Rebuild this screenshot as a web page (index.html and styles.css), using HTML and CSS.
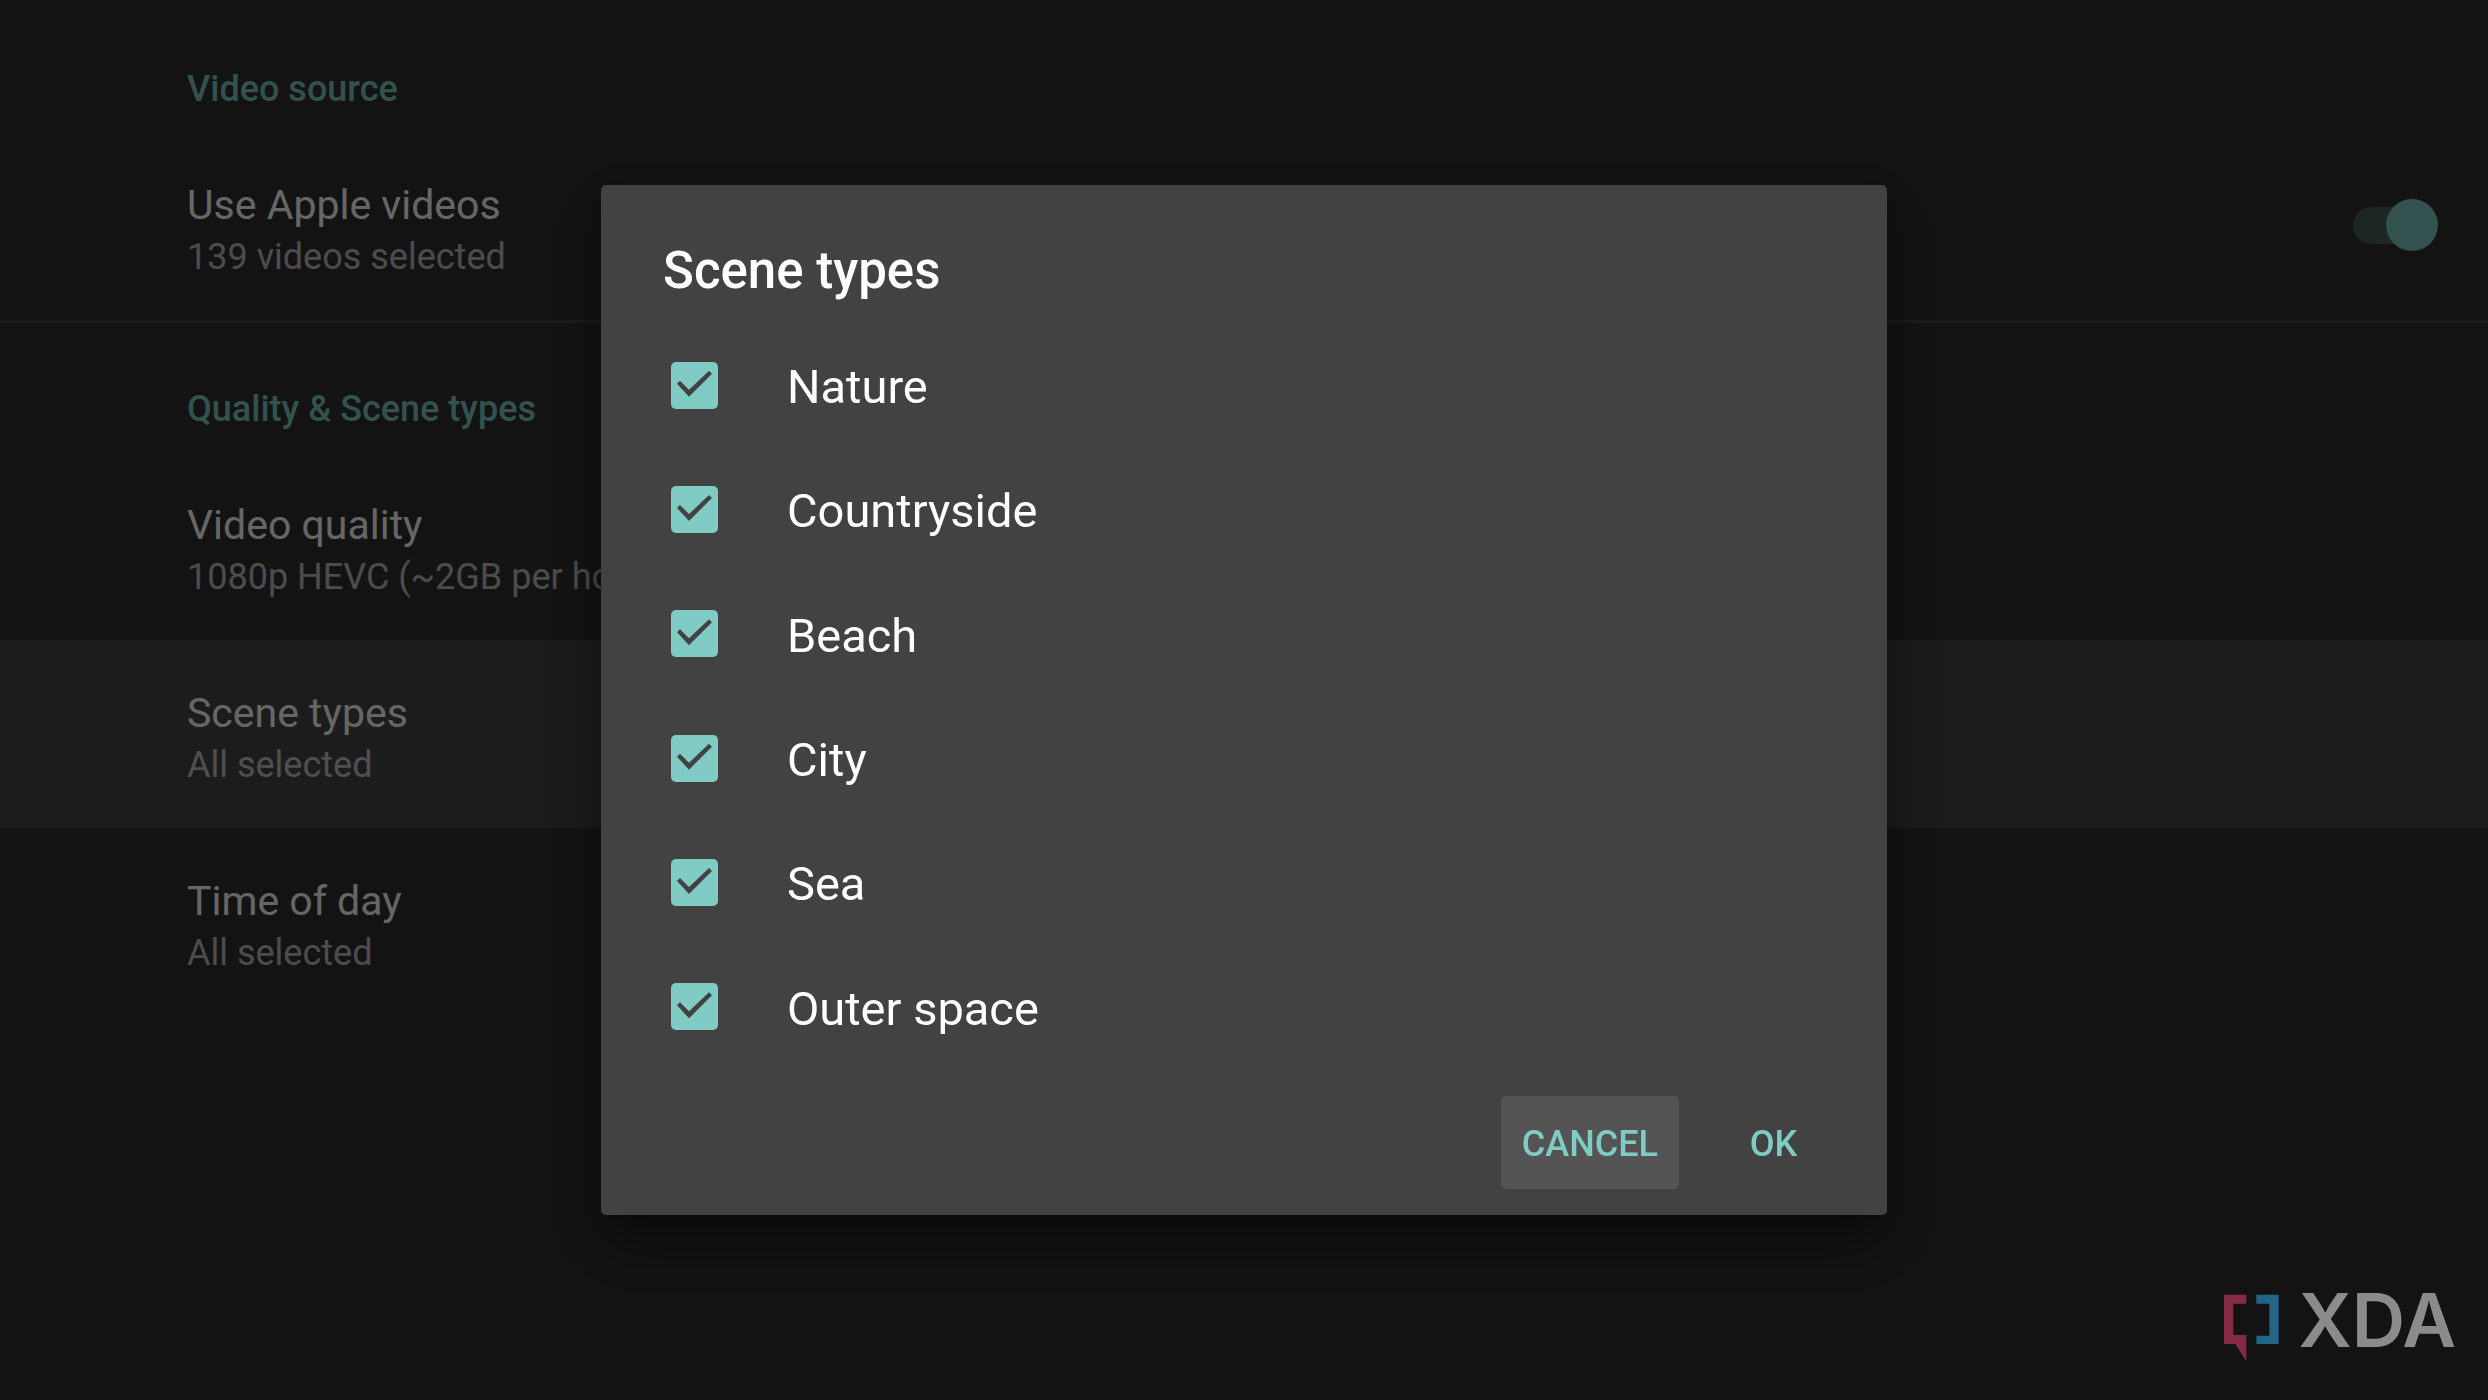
FILE: index.html
```html
<!DOCTYPE html>
<html lang="en">
<head>
<meta charset="utf-8">
<meta name="viewport" content="width=device-width, initial-scale=1">
<title>Video settings</title>
<link rel="stylesheet" href="styles.css">
</head>
<body>
<main class="settings">
  <section class="group">
    <h2 class="category">Video source</h2>
    <div class="row">
      <label class="row-text" for="apple-videos">
        <span class="row-title">Use Apple videos</span>
        <span class="row-summary">139 videos selected</span>
      </label>
      <input class="switch" type="checkbox" role="switch" id="apple-videos" checked>
    </div>
  </section>
  <section class="group">
    <h2 class="category">Quality &amp; Scene types</h2>
    <button class="row" type="button">
      <span class="row-text">
        <span class="row-title">Video quality</span>
        <span class="row-summary">1080p HEVC (~2GB per hour)</span>
      </span>
    </button>
    <button class="row row-focused" type="button">
      <span class="row-text">
        <span class="row-title">Scene types</span>
        <span class="row-summary">All selected</span>
      </span>
    </button>
    <button class="row" type="button">
      <span class="row-text">
        <span class="row-title">Time of day</span>
        <span class="row-summary">All selected</span>
      </span>
    </button>
  </section>
</main>

<div class="scrim">
  <form class="dialog" role="dialog" aria-modal="true" aria-labelledby="dialog-title">
    <h1 class="dialog-title" id="dialog-title">Scene types</h1>
    <div class="choices">
      <label class="choice"><input class="tick" type="checkbox" checked><span class="choice-name">Nature</span></label>
      <label class="choice"><input class="tick" type="checkbox" checked><span class="choice-name">Countryside</span></label>
      <label class="choice"><input class="tick" type="checkbox" checked><span class="choice-name">Beach</span></label>
      <label class="choice"><input class="tick" type="checkbox" checked><span class="choice-name">City</span></label>
      <label class="choice"><input class="tick" type="checkbox" checked><span class="choice-name">Sea</span></label>
      <label class="choice"><input class="tick" type="checkbox" checked><span class="choice-name">Outer space</span></label>
    </div>
    <div class="actions">
      <button class="action action-focused" type="button">CANCEL</button>
      <button class="action" type="button">OK</button>
    </div>
  </form>
</div>

<div class="brand">
  <svg class="brand-mark" viewBox="0 0 165 204" aria-hidden="true">
    <path fill="#852b45" d="M0 2H67V29H28V123H67V202L34 150H0Z"/>
    <path fill="#226587" d="M97 2H164V150H97V125H136V29H97Z"/>
  </svg>
  <span class="brand-name">XDA</span>
</div>
</body>
</html>
```
FILE: styles.css
```css
:root {
  --surface: #303030;
  --raised: #424242;
  --focus: #464646;
  --accent: #80cbc4;
}

* {
  box-sizing: border-box;
}

body {
  margin: 0;
  min-height: 100vh;
  background: var(--surface);
  color: #fff;
  font-family: Roboto, "Liberation Sans", sans-serif;
}

h1,
h2 {
  margin: 0;
  font-weight: 500;
}

button {
  border: 0;
  background: none;
  color: inherit;
  font: inherit;
  text-align: left;
}

/* Settings list */
.settings {
  padding-top: 3px;
}

.group + .group {
  border-top: 3px solid var(--focus);
}

.category {
  padding: 65px 187px 22px;
  color: var(--accent);
  font-size: 36px;
  line-height: 42px;
}

.row {
  display: flex;
  align-items: center;
  justify-content: space-between;
  width: 100%;
  padding: 48px 50px 37px 187px;
}

.row-focused {
  background: var(--focus);
}

.row-text {
  display: flex;
  flex-direction: column;
  gap: 1px;
}

.row-title {
  font-size: 41px;
  line-height: 50px;
}

.row-summary {
  color: rgba(255, 255, 255, 0.7);
  font-size: 36px;
  line-height: 52px;
}

.switch {
  display: grid;
  align-items: center;
  width: 85px;
  height: 52px;
  margin: 0 0 13px;
  appearance: none;
}

.switch::before,
.switch::after {
  grid-area: 1 / 1;
  content: "";
}

.switch::before {
  width: 80px;
  height: 37px;
  border-radius: 19px;
  background: #485f5c;
}

.switch::after {
  justify-self: end;
  width: 52px;
  height: 52px;
  border-radius: 50%;
  background: var(--accent);
}

/* Dialog */
.scrim {
  position: fixed;
  inset: 0;
  display: flex;
  align-items: center;
  justify-content: center;
  background: rgba(0, 0, 0, 0.6);
}

.dialog {
  width: 1286px;
  max-width: 100%;
  border-radius: 5px;
  background: var(--raised);
  box-shadow: 0 30px 60px rgba(0, 0, 0, 0.4), 0 0 30px rgba(0, 0, 0, 0.2);
}

.dialog-title {
  padding: 55px 62px 21px;
  font-size: 51px;
  line-height: 62px;
}

.choices {
  display: grid;
  grid-template-rows: repeat(6, 1fr);
  height: 746px;
}

.choice {
  display: flex;
  align-items: center;
  gap: 69px;
  padding: 0 70px;
  font-size: 47px;
  line-height: 56px;
}

.choice-name {
  padding-top: 4px;
}

.tick {
  display: grid;
  width: 47px;
  height: 47px;
  margin: 0;
  border-radius: 5px;
  background: var(--accent);
  appearance: none;
}

.tick:checked::before {
  content: "";
  background: var(--raised);
  clip-path: path("M6 22L9 19L18 28L38 9L41 12L18 35Z");
}

.actions {
  display: flex;
  justify-content: flex-end;
  gap: 22px;
  padding: 27px 41px 26px;
}

.action {
  min-width: 145px;
  padding: 27px 21px 24px;
  border-radius: 5px;
  color: var(--accent);
  font-size: 36px;
  font-weight: 500;
  line-height: 42px;
  text-align: center;
}

.action-focused {
  background: #545454;
}

/* Watermark over the lower right corner */
.brand {
  position: fixed;
  right: 32px;
  bottom: 38px;
  display: flex;
  justify-content: space-between;
  width: 232px;
}

.brand-mark {
  width: 55px;
  height: 68px;
}

.brand-name {
  color: #8b8b8b;
  font-family: Inter, "Liberation Sans", sans-serif;
  font-size: 74px;
  font-weight: 600;
  line-height: 52px;
}
```
